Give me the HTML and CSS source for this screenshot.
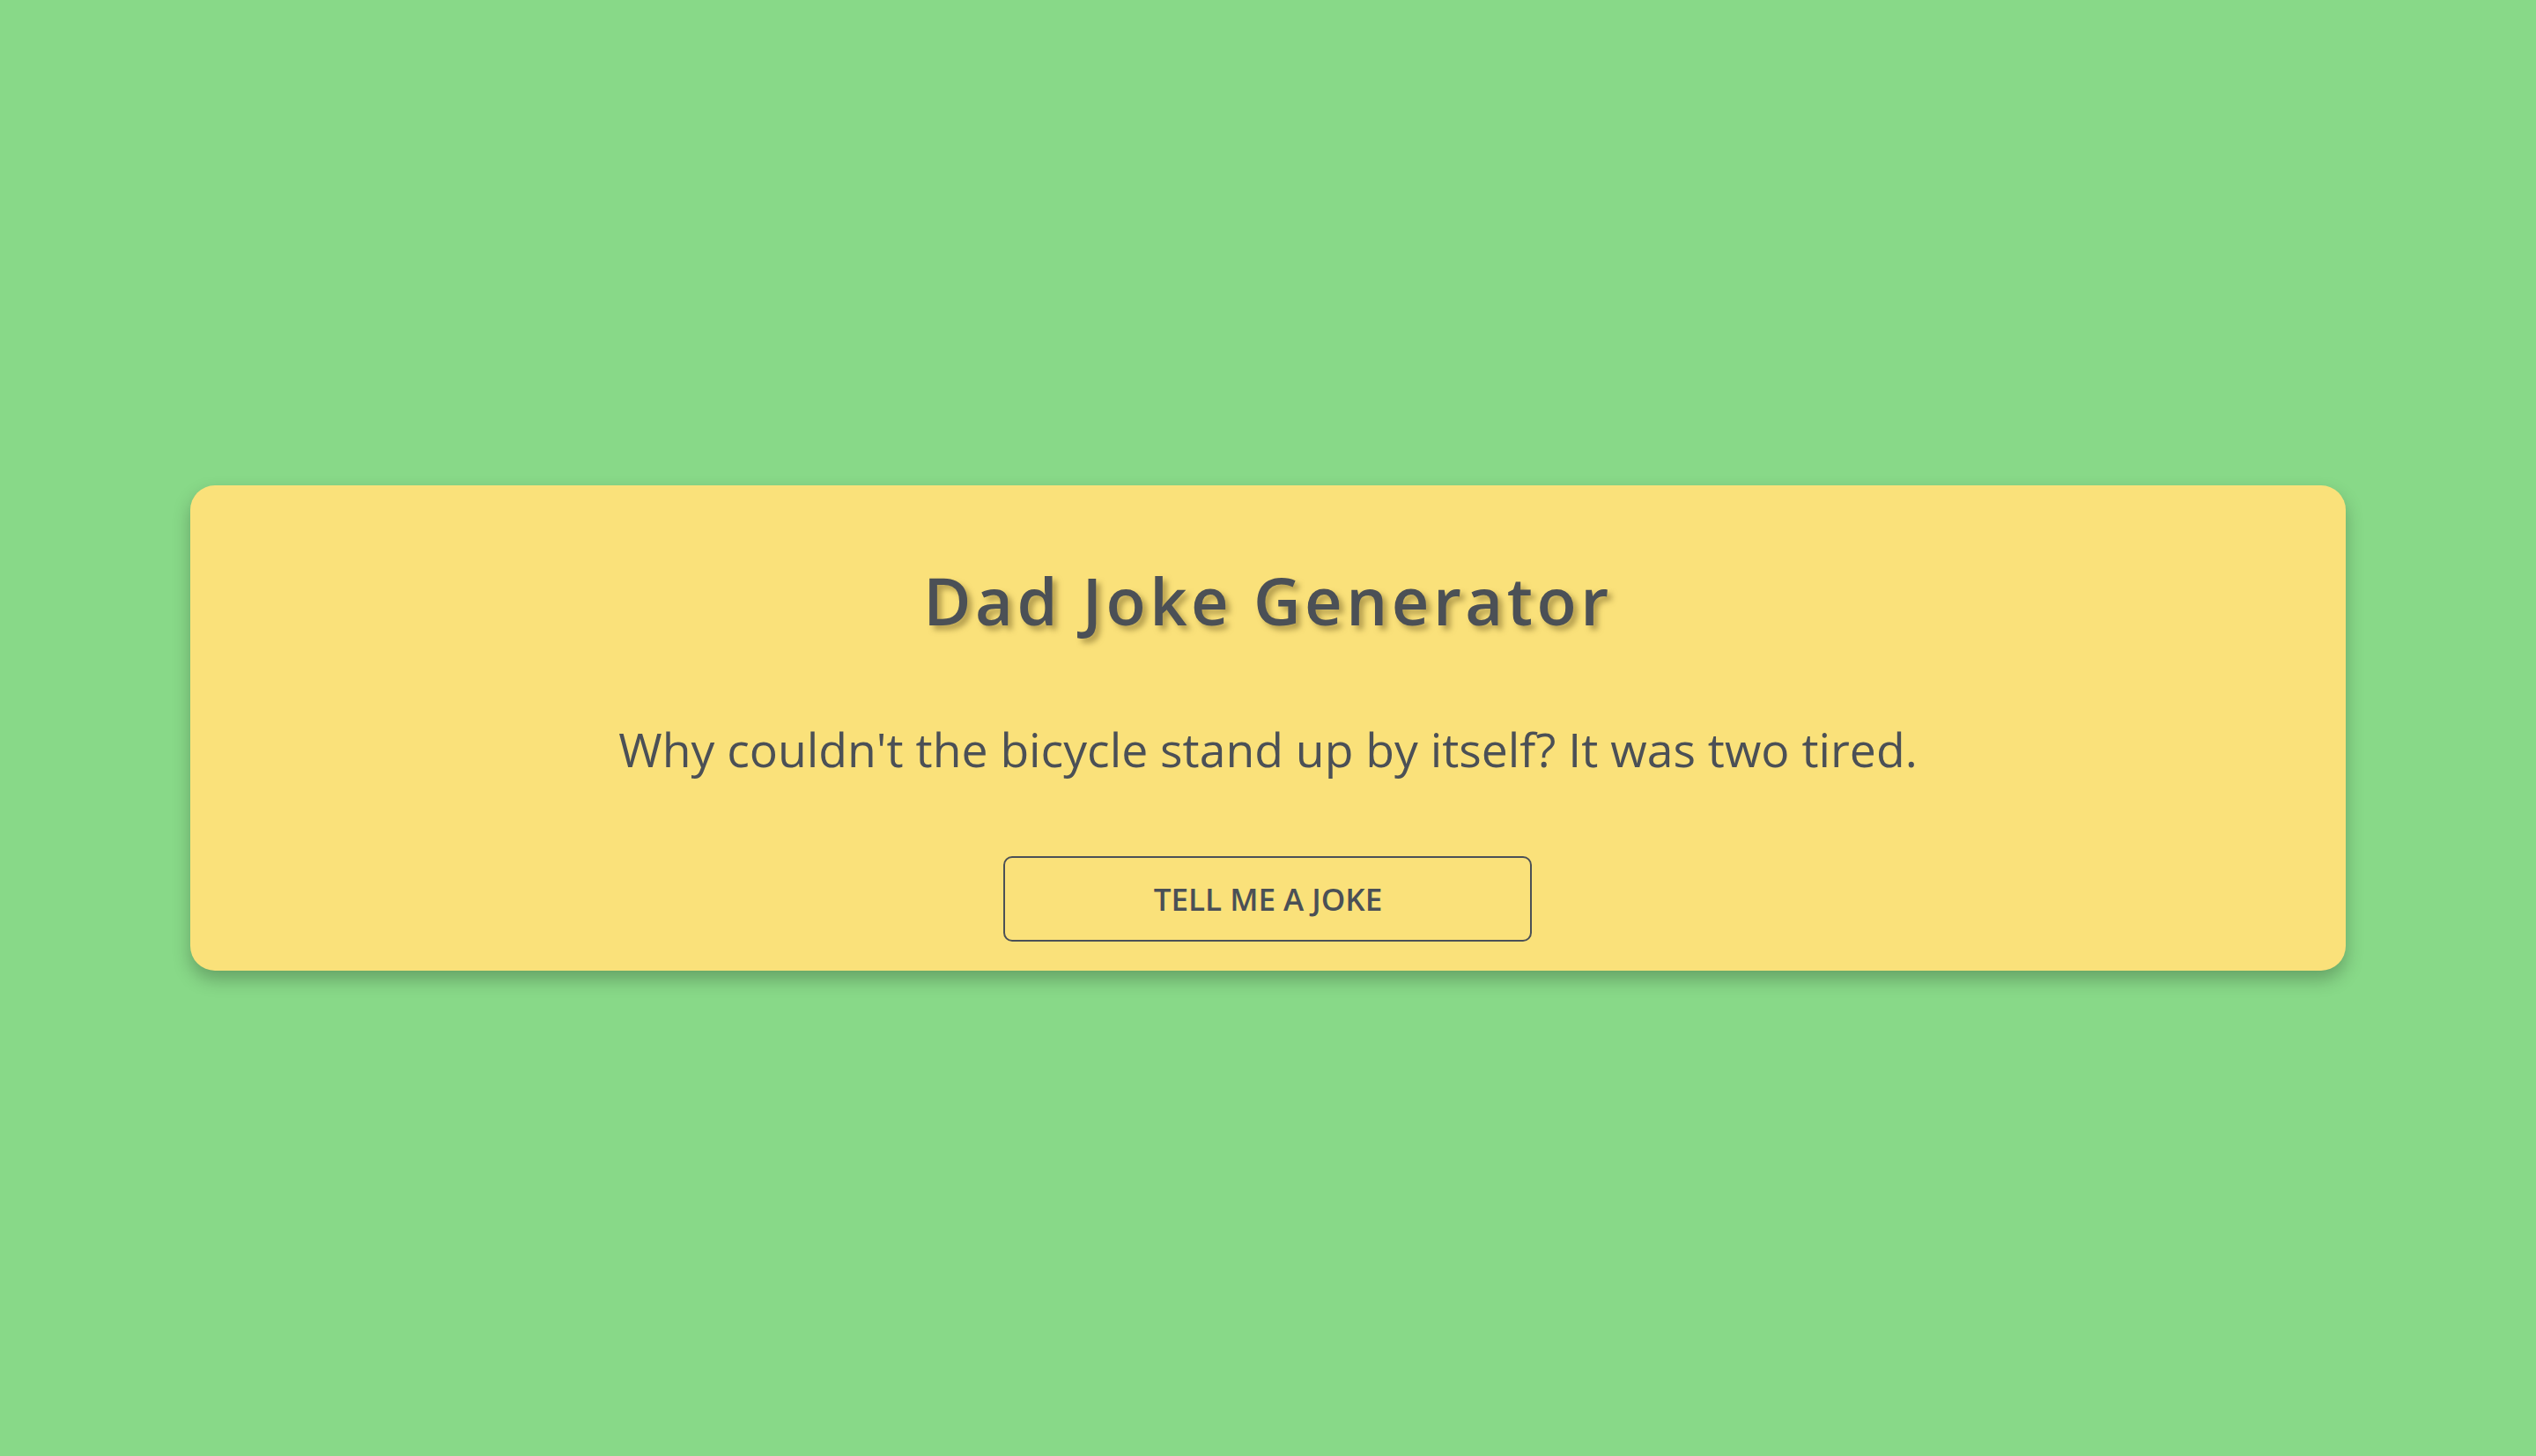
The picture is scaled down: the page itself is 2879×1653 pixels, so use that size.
FILE: index.html
```html
<!DOCTYPE html>
<html lang="en">
<head>
<meta charset="utf-8">
<title>Dad Joke Generator</title>
<link rel="stylesheet" href="styles.css">
</head>
<body>
  <main class="card">
    <h1 class="title">Dad Joke Generator</h1>
    <p class="joke">Why couldn't the bicycle stand up by itself? It was two tired.</p>
    <button class="btn" type="button">TELL ME A JOKE</button>
  </main>
</body>
</html>
```

FILE: styles.css
```css
* { box-sizing: border-box; }
html, body { margin: 0; padding: 0; }
body {
  background: #88d988;
  font-family: "Open Sans", "Liberation Sans", sans-serif;
  color: #4b5056;
  min-height: 100vh;
  display: flex;
  align-items: center;
  justify-content: center;
}
.card {
  width: 85%;
  background: #fae17a;
  border-radius: 28px;
  box-shadow: 0 10px 20px rgba(0, 0, 0, 0.25);
  display: flex;
  flex-direction: column;
  align-items: center;
  padding: 87px 40px 33px;
}
.title {
  margin: 0;
  font-size: 74px;
  line-height: 1.2;
  font-weight: 600;
  letter-spacing: 4.5px;
  text-shadow: 5px 5px 6px rgba(120, 100, 40, 0.55);
}
.joke {
  margin: 93px 0 0;
  font-size: 53.5px;
  line-height: 1.2;
  font-weight: 400;
}
.btn {
  margin-top: 89px;
  width: 600px;
  height: 97px;
  background: transparent;
  border: 2px solid #4b5056;
  border-radius: 10px;
  font-family: inherit;
  font-size: 35px;
  font-weight: 600;
  color: #4b5056;
}
```
